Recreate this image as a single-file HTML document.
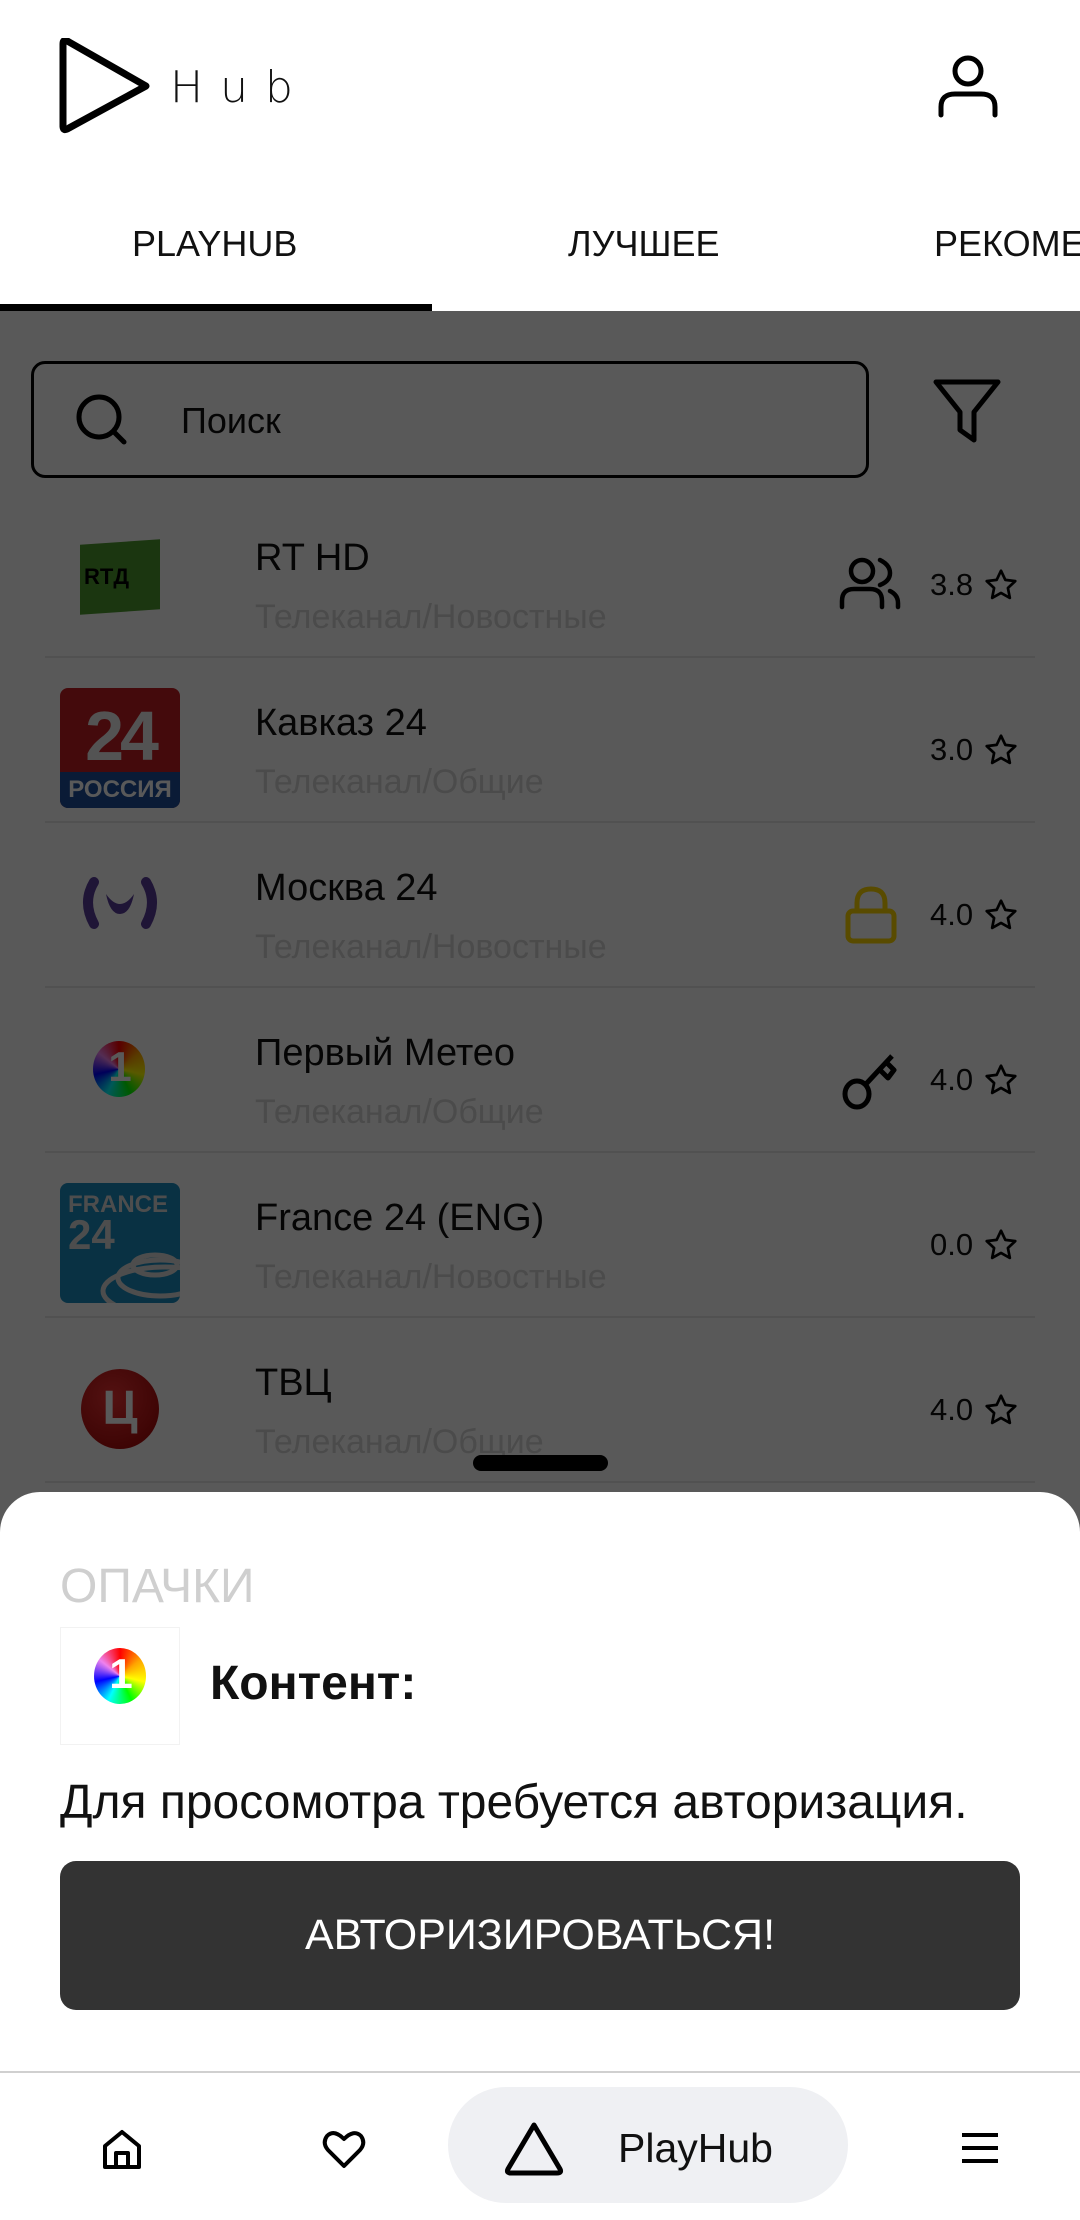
<!DOCTYPE html>
<html><head><meta charset="utf-8"><style>
*{margin:0;padding:0;box-sizing:border-box}
html,body{width:1080px;height:2220px;overflow:hidden}
body{position:relative;background:#fff;font-family:"Liberation Sans",sans-serif;}
#w{position:absolute;left:0;top:0;width:1080px;height:2220px;overflow:hidden}
.abs{position:absolute}
.tab{position:absolute;top:223px;font-size:36px;color:#111;white-space:nowrap}
.row{position:absolute;left:0;width:1080px;height:165px}
.row .sep{position:absolute;left:45px;right:45px;bottom:0;height:2px;background:#e8e8e8}
.row .logo{position:absolute;left:60px;top:23px;width:120px;height:120px}
.row .t{position:absolute;left:255px;top:44px;font-size:38px;color:#111;white-space:nowrap}
.row .s{position:absolute;left:255px;top:105px;font-size:34px;color:#d6d6d6;white-space:nowrap}
.row .r{position:absolute;left:930px;top:74px;font-size:31px;color:#111}
.row .star{position:absolute;left:983px;top:74px}
.ov{position:absolute;left:0;top:311px;width:1080px;height:1909px;background:rgba(0,0,0,0.65)}
</style></head><body><div id="w">
<!-- header -->
<svg class="abs" style="left:56px;top:38px" width="100" height="96" viewBox="0 0 100 96"><path d="M7 6 L7 88 Q7 94 13 90 L90 48 L13 4 Q7 0 7 6Z" fill="none" stroke="#000" stroke-width="7" stroke-linejoin="round"/></svg>
<div class="abs" style="left:170px;top:62px;font-size:44px;letter-spacing:17px;color:#111;font-family:'DejaVu Sans',sans-serif;font-weight:200">Hub</div>
<svg class="abs" style="left:935px;top:52px" width="66" height="66" viewBox="0 0 66 66"><circle cx="33" cy="19" r="13" fill="none" stroke="#000" stroke-width="5"/><path d="M6 63 V55 Q6 42 20 42 H46 Q60 42 60 55 V63" fill="none" stroke="#000" stroke-width="5" stroke-linecap="round"/></svg>
<div class="tab" style="left:132px">PLAYHUB</div>
<div class="tab" style="left:568px">ЛУЧШЕЕ</div>
<div class="tab" style="left:934px">РЕКОМЕНДАЦИИ</div>
<div class="abs" style="left:0;top:304px;width:432px;height:7px;background:#000"></div>
<!-- search -->
<div class="abs" style="left:31px;top:361px;width:838px;height:117px;border:3px solid #000;border-radius:14px"></div>
<svg class="abs" style="left:74px;top:392px" width="56" height="56" viewBox="0 0 56 56"><circle cx="25" cy="25" r="20" fill="none" stroke="#000" stroke-width="5"/><path d="M40 40 L50 50" stroke="#000" stroke-width="5" stroke-linecap="round"/></svg>
<div class="abs" style="left:181px;top:400px;font-size:36px;color:#111">Поиск</div>
<svg class="abs" style="left:932px;top:378px" width="70" height="66" viewBox="0 0 70 66"><path d="M4 4 H66 L42 34 V62 L28 52 V34 Z" fill="none" stroke="#000" stroke-width="5" stroke-linejoin="round"/></svg>
<!-- rows -->
<div class="row" style="top:493px"><div class="logo"><div style="position:absolute;left:20px;top:26px;width:80px;height:70px;background:#4d9a2e;transform:skewY(-4deg)"></div><div style="position:absolute;left:24px;top:48px;font:bold 22px 'Liberation Sans';color:#000">RTД</div></div><div class="t">RT HD</div><div class="s">Телеканал/Новостные</div>
<svg class="abs" style="left:838px;top:62px" width="64" height="56" viewBox="0 0 64 56"><circle cx="24" cy="16" r="11" fill="none" stroke="#000" stroke-width="4.5"/><path d="M4 52 V46 Q4 34 16 34 H32 Q44 34 44 46 V52" fill="none" stroke="#000" stroke-width="4.5" stroke-linecap="round"/><path d="M42 5 Q52 10 52 18 Q52 26 42 30 M52 36 Q60 40 60 48 V52" fill="none" stroke="#000" stroke-width="4.5" stroke-linecap="round"/></svg>
<div class="r">3.8</div><svg class="star" width="36" height="36" viewBox="0 0 24 24"><path d="M12 2.5l2.9 6.1 6.6.8-4.9 4.6 1.3 6.6L12 17.3l-5.9 3.3 1.3-6.6-4.9-4.6 6.6-.8z" fill="none" stroke="#000" stroke-width="1.8" stroke-linejoin="round"/></svg><div class="sep"></div></div>

<div class="row" style="top:658px"><div class="logo" style="top:30px;background:#c41e24;border-radius:8px;overflow:hidden"><div style="position:absolute;left:0;top:8px;width:120px;text-align:center;font:bold 70px 'Liberation Sans';color:#eee;letter-spacing:-4px">24</div><div style="position:absolute;left:0;bottom:0;width:120px;height:36px;background:#1d4f9a;color:#fff;font:bold 24px 'Liberation Sans';text-align:center;line-height:36px">РОССИЯ</div></div><div class="t">Кавказ 24</div><div class="s">Телеканал/Общие</div>
<div class="r">3.0</div><svg class="star" width="36" height="36" viewBox="0 0 24 24"><path d="M12 2.5l2.9 6.1 6.6.8-4.9 4.6 1.3 6.6L12 17.3l-5.9 3.3 1.3-6.6-4.9-4.6 6.6-.8z" fill="none" stroke="#000" stroke-width="1.8" stroke-linejoin="round"/></svg><div class="sep"></div></div>

<div class="row" style="top:823px"><div class="logo"><svg width="120" height="120" viewBox="0 0 120 120"><path d="M34 36 Q22 56 34 78 M86 36 Q98 56 86 78" fill="none" stroke="#5b3d9a" stroke-width="10" stroke-linecap="round"/><path d="M46 48 Q60 68 74 48 Q70 68 60 68 Q50 68 46 48Z" fill="#5b3d9a"/></svg></div><div class="t">Москва 24</div><div class="s">Телеканал/Новостные</div>
<svg class="abs" style="left:843px;top:62px" width="56" height="60" viewBox="0 0 56 60"><path d="M14 26 V18 Q14 4 28 4 Q42 4 42 18 V26" fill="none" stroke="#ffd700" stroke-width="5"/><rect x="5" y="26" width="46" height="30" rx="5" fill="none" stroke="#ffd700" stroke-width="5"/></svg>
<div class="r">4.0</div><svg class="star" width="36" height="36" viewBox="0 0 24 24"><path d="M12 2.5l2.9 6.1 6.6.8-4.9 4.6 1.3 6.6L12 17.3l-5.9 3.3 1.3-6.6-4.9-4.6 6.6-.8z" fill="none" stroke="#000" stroke-width="1.8" stroke-linejoin="round"/></svg><div class="sep"></div></div>

<div class="row" style="top:988px"><div class="logo"><div style="position:absolute;left:33px;top:30px;width:52px;height:56px;border-radius:50%;background:conic-gradient(red,orange,yellow,lime,cyan,blue,violet,red)"></div><div style="position:absolute;left:0;top:32px;width:120px;text-align:center;font:bold 42px 'Liberation Sans';color:#fff">1</div></div><div class="t">Первый Метео</div><div class="s">Телеканал/Общие</div>
<svg class="abs" style="left:840px;top:62px" width="60" height="62" viewBox="0 0 60 62"><ellipse cx="17" cy="44" rx="12" ry="13" fill="none" stroke="#000" stroke-width="5"/><path d="M26 34 L52 6 M40 20 L48 28 L54 20 L46 12" fill="none" stroke="#000" stroke-width="5" stroke-linejoin="round"/></svg>
<div class="r">4.0</div><svg class="star" width="36" height="36" viewBox="0 0 24 24"><path d="M12 2.5l2.9 6.1 6.6.8-4.9 4.6 1.3 6.6L12 17.3l-5.9 3.3 1.3-6.6-4.9-4.6 6.6-.8z" fill="none" stroke="#000" stroke-width="1.8" stroke-linejoin="round"/></svg><div class="sep"></div></div>

<div class="row" style="top:1153px"><div class="logo" style="top:30px;background:#1a8dc0;border-radius:8px;overflow:hidden"><div style="position:absolute;left:8px;top:8px;font:bold 24px 'Liberation Sans';color:#ddd">FRANCE</div><div style="position:absolute;left:8px;top:28px;font:bold 42px 'Liberation Sans';color:#ddd">24</div><svg class="abs" style="left:0;top:0" width="120" height="120"><ellipse cx="95" cy="82" rx="22" ry="10" fill="none" stroke="#ddd" stroke-width="5"/><ellipse cx="100" cy="95" rx="42" ry="18" fill="none" stroke="#ddd" stroke-width="5"/><ellipse cx="105" cy="108" rx="62" ry="24" fill="none" stroke="#ddd" stroke-width="5"/></svg></div><div class="t">France 24 (ENG)</div><div class="s">Телеканал/Новостные</div>
<div class="r">0.0</div><svg class="star" width="36" height="36" viewBox="0 0 24 24"><path d="M12 2.5l2.9 6.1 6.6.8-4.9 4.6 1.3 6.6L12 17.3l-5.9 3.3 1.3-6.6-4.9-4.6 6.6-.8z" fill="none" stroke="#000" stroke-width="1.8" stroke-linejoin="round"/></svg><div class="sep"></div></div>

<div class="row" style="top:1318px"><div class="logo"><div style="position:absolute;left:21px;top:28px;width:78px;height:80px;border-radius:50%;background:radial-gradient(circle at 40% 35%,#e33,#9a0000)"></div><div style="position:absolute;left:0;top:40px;width:120px;text-align:center;font:bold 48px 'Liberation Sans';color:#fff">Ц</div></div><div class="t">ТВЦ</div><div class="s">Телеканал/Общие</div>
<div class="r">4.0</div><svg class="star" width="36" height="36" viewBox="0 0 24 24"><path d="M12 2.5l2.9 6.1 6.6.8-4.9 4.6 1.3 6.6L12 17.3l-5.9 3.3 1.3-6.6-4.9-4.6 6.6-.8z" fill="none" stroke="#000" stroke-width="1.8" stroke-linejoin="round"/></svg><div class="sep"></div></div>

<div class="ov"></div>
<div class="abs" style="left:473px;top:1455px;width:135px;height:16px;background:#000;border-radius:8px"></div>
<!-- sheet -->
<div class="abs" style="left:0;top:1492px;width:1080px;height:728px;background:#fff;border-radius:40px 40px 0 0"></div>
<div class="abs" style="left:60px;top:1559px;font-size:48px;color:#cfcfcf">ОПАЧКИ</div>
<div class="abs" style="left:60px;top:1627px;width:120px;height:118px;border:1px solid #f2f2f2"><div style="position:absolute;left:33px;top:20px;width:52px;height:56px;border-radius:50%;background:conic-gradient(red,orange,yellow,lime,cyan,blue,violet,red)"></div><div style="position:absolute;left:0;top:22px;width:120px;text-align:center;font:bold 42px 'Liberation Sans';color:#fff">1</div></div>
<div class="abs" style="left:210px;top:1656px;font-size:48px;font-weight:bold;color:#111">Контент:</div>
<div class="abs" style="left:60px;top:1775px;font-size:48px;color:#111;white-space:nowrap">Для просомотра требуется авторизация.</div>
<div class="abs" style="left:60px;top:1861px;width:960px;height:149px;background:#333;border-radius:16px;color:#fff;font-size:43px;text-align:center;line-height:149px">АВТОРИЗИРОВАТЬСЯ!</div>
<div class="abs" style="left:0;top:2071px;width:1080px;height:2px;background:#d0d0d0"></div>
<!-- nav -->
<svg class="abs" style="left:100px;top:2127px" width="44" height="44" viewBox="0 0 44 44"><path d="M5 19 L22 5 L39 19 V40 H5 Z M16 40 V26 H28 V40" fill="none" stroke="#000" stroke-width="4" stroke-linejoin="round"/></svg>
<svg class="abs" style="left:322px;top:2129px" width="44" height="40" viewBox="0 0 44 40"><path d="M22 37 L6 21 Q0 14 5 7 Q12 0 22 10 Q32 0 39 7 Q44 14 38 21 Z" fill="none" stroke="#000" stroke-width="4" stroke-linejoin="round"/></svg>
<div class="abs" style="left:448px;top:2087px;width:400px;height:116px;background:#eff0f3;border-radius:58px"></div>
<svg class="abs" style="left:503px;top:2120px" width="62" height="56" viewBox="0 0 62 56"><path d="M31 5 L57 49 Q59 53 54 53 H8 Q3 53 5 49 Z" fill="none" stroke="#000" stroke-width="5" stroke-linejoin="round"/></svg>
<div class="abs" style="left:618px;top:2125px;font-size:41px;color:#111">PlayHub</div>
<svg class="abs" style="left:960px;top:2131px" width="40" height="34" viewBox="0 0 40 34"><path d="M2 4 H38 M2 17 H38 M2 30 H38" stroke="#000" stroke-width="4"/></svg>
</div></body></html>
